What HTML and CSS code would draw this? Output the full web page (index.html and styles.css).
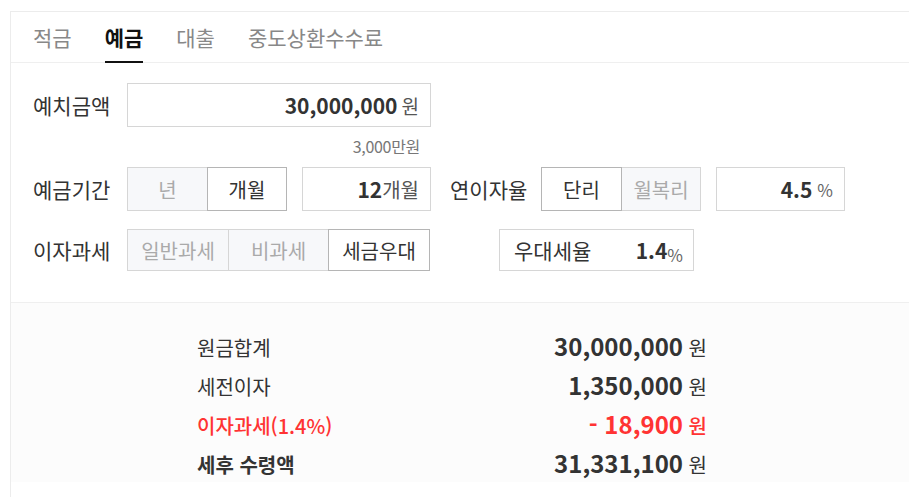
FILE: index.html
```html
<!DOCTYPE html>
<html lang="ko">
<head>
    <meta charset="UTF-8">
    <title>예금 계산기</title>
    <link rel="stylesheet" href="styles.css">
</head>
<body>
    <div class="calc">
        <!-- 탭 -->
        <ul class="tabs">
            <li class="tab">적금</li>
            <li class="tab active">예금</li>
            <li class="tab">대출</li>
            <li class="tab">중도상환수수료</li>
        </ul>

        <div class="form">
            <div class="row">
                <span class="label">예치금액</span>
                <div class="box box-wide">
                    <b class="num">30,000,000</b><span class="unit">원</span>
                </div>
            </div>
            <div class="hint">3,000만원</div>

            <div class="row">
                <span class="label">예금기간</span>
                <div class="seg">
                    <button class="seg-btn">년</button>
                    <button class="seg-btn on">개월</button>
                </div>
                <div class="box box-sm">
                    <b class="num">12</b><span class="unit tight">개월</span>
                </div>
                <span class="label label-2">연이자율</span>
                <div class="seg">
                    <button class="seg-btn on">단리</button>
                    <button class="seg-btn">월복리</button>
                </div>
                <div class="box box-sm">
                    <b class="num">4.5</b><span class="unit pct">%</span>
                </div>
            </div>

            <div class="row row-3">
                <span class="label">이자과세</span>
                <div class="seg seg-3">
                    <button class="seg-btn">일반과세</button>
                    <button class="seg-btn">비과세</button>
                    <button class="seg-btn on">세금우대</button>
                </div>
                <div class="box box-rate">
                    <span class="rate-label">우대세율</span>
                    <span><b class="num">1.4</b><span class="unit pct snug">%</span></span>
                </div>
            </div>
        </div>

        <!-- 결과 -->
        <div class="result">
            <div class="res-row">
                <span>원금합계</span>
                <span><b class="res-num">30,000,000</b> 원</span>
            </div>
            <div class="res-row">
                <span>세전이자</span>
                <span><b class="res-num">1,350,000</b> 원</span>
            </div>
            <div class="res-row red">
                <span>이자과세(1.4%)</span>
                <span><b class="res-num">- 18,900</b> 원</span>
            </div>
            <div class="res-row total">
                <span>세후 수령액</span>
                <span><b class="res-num">31,331,100</b> 원</span>
            </div>
        </div>
    </div>
</body>
</html>
```

FILE: styles.css
```css
body {
    margin: 0;
    background: #fff;
    font-family: "Noto Sans CJK KR", "Noto Sans", sans-serif;
    color: #333;
}

.calc {
    margin: 11px -40px 0 10px;
    border: 1px solid #ececec;
    height: 600px;
}

.tabs {
    display: flex;
    list-style: none;
    margin: 0;
    padding: 0 0 0 22px;
    height: 50px;
    border-bottom: 1px solid #efefef;
}
.tab {
    font-size: 21px;
    line-height: 50px;
    color: #888;
    margin-right: 33px;
    height: 50px;
}
.tab.active {
    color: #111;
    font-weight: bold;
    border-bottom: 2px solid #111;
    height: 49px;
    margin-bottom: -1px;
}

.form {
    padding: 20px 0 31px 22px;
}
.row {
    display: flex;
    align-items: center;
    height: 44px;
}
.row-3 {
    height: 42px;
    margin-top: 18px;
}
.label {
    width: 94px;
    font-size: 21px;
    color: #333;
}
.label-2 {
    width: 91px;
    margin-left: 19px;
}

.box {
    box-sizing: border-box;
    height: 100%;
    border: 1px solid #d6d6d6;
    display: flex;
    align-items: center;
    justify-content: flex-end;
    padding-right: 11px;
    background: #fff;
}
.box-wide {
    width: 304px;
}
.box-sm {
    width: 129px;
    margin-left: 15px;
}
.num {
    font-size: 21px;
    font-weight: bold;
    color: #333;
}
.unit {
    font-size: 19px;
    color: #555;
    margin-left: 4px;
}
.unit.tight {
    margin-left: 0;
    font-size: 20px;
}
.pct {
    font-size: 17px;
    color: #666;
    margin-left: 5px;
}
.pct.snug {
    margin-left: 0;
    position: relative;
    top: 3px;
}
.hint {
    width: 304px;
    margin: 9px 0 11px 94px;
    box-sizing: border-box;
    padding-right: 11px;
    text-align: right;
    font-size: 16px;
    line-height: 20px;
    letter-spacing: -0.3px;
    color: #777;
}

.seg {
    display: flex;
    height: 100%;
}
.seg-btn {
    box-sizing: border-box;
    width: 80px;
    height: 100%;
    margin: 0 0 0 -1px;
    border: 1px solid #d6d6d6;
    background: #f7f8fa;
    color: #aaa;
    font-family: inherit;
    font-size: 20px;
    padding: 0;
}
.seg-btn:first-child {
    width: 81px;
    margin-left: 0;
}
.seg-btn.on {
    background: #fff;
    color: #333;
    border-color: #b5b5b5;
    position: relative;
}
.seg-3 .seg-btn {
    width: 102px;
}
.seg-3 .seg-btn:nth-child(2) {
    width: 101px;
}

.box-rate {
    width: 195px;
    margin-left: 69px;
    justify-content: space-between;
    padding: 0 10px 0 14px;
}
.rate-label {
    font-size: 21px;
    color: #333;
}

.result {
    background: #fcfcfc;
    border-top: 1px solid #efefef;
    padding: 23px 0 0 186px;
}
.res-row {
    width: 510px;
    display: flex;
    justify-content: space-between;
    align-items: baseline;
    height: 39px;
    line-height: 39px;
    font-size: 20px;
    color: #333;
}
.res-num {
    font-size: 24px;
    font-weight: bold;
}
.res-row.red {
    color: #ff3333;
    font-weight: 500;
}
.res-row.red .res-num {
    font-weight: bold;
}
.res-row.total > span:first-child {
    font-weight: bold;
}
```
